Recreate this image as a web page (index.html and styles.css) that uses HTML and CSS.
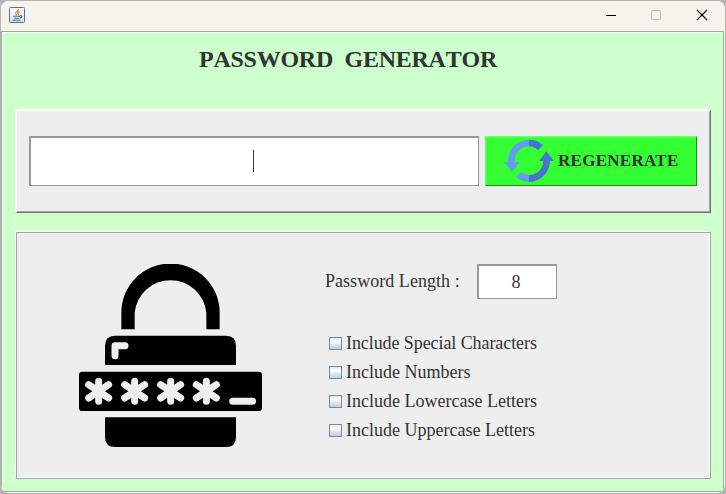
FILE: index.html
```
<!DOCTYPE html>
<html lang="en">
<head>
<meta charset="utf-8">
<title>Password Generator</title>
<link rel="stylesheet" href="styles.css">
</head>
<body>
<div class="window">
  <header class="titlebar">
    <svg class="java" width="16" height="16" viewBox="0 0 16 16">
      <defs><linearGradient id="jv" x1="0" y1="0" x2="0" y2="1"><stop offset="0" stop-color="#fff"/><stop offset="1" stop-color="#d3e0ea"/></linearGradient></defs>
      <rect x=".5" y=".5" width="15" height="15" rx="1" fill="url(#jv)" stroke="#55758d"/>
      <path d="M9.5 2.2C10 4 6 5 6.6 6.6C6.8 7.3 7.6 7.5 7.7 8.4M10.6 4.8C9 5.4 8.2 6.4 9.2 7.2C9.5 7.6 9.2 8 8.9 8.3" fill="none" stroke="#e5812b" stroke-width="1.2"/>
      <path d="M4 9.3H11M11 8.8C13.6 8.2 13.6 10.5 11 11M5 11.2H10.5M3.5 13.2H11.5" fill="none" stroke="#53788f" stroke-width="1.1"/>
    </svg>
    <svg class="controls" width="104" height="12" viewBox="0 0 104 12">
      <path d="M0 6.5H10" stroke="#000" fill="none"/>
      <rect x="45.5" y="1.5" width="9" height="9" rx=".5" stroke="#c5c1bd" fill="none"/>
      <path d="M91 1L101 11M101 1L91 11" stroke="#000" stroke-width="1.1" fill="none"/>
    </svg>
  </header>
  <main class="content">
    <h1 class="title">PASSWORD&nbsp; GENERATOR</h1>
    <section class="output">
      <div class="field result"><span class="caret"></span></div>
      <button class="regen" type="button">
        <svg width="50" height="44" viewBox="0 0 150 132">
          <path d="M75 2A64 64 0 0 0 12 69H0L24 99L46 69H32A43 43 0 0 1 75 22ZM51 98L36 114Q53 128 75 129V108Q62 107 51 98Z" fill="#649bec"/>
          <path d="M75 2V22Q91 23 102 34L117 18Q99 2 75 2ZM75 129A64 64 0 0 0 138 66H150L127 37L105 66H118A43 43 0 0 1 75 108Z" fill="#4874ce"/>
        </svg>
        <span>REGENERATE</span>
      </button>
    </section>
    <section class="settings">
      <svg class="lock" width="183" height="183" viewBox="27 27 549 549">
        <path d="M154 223V173A147 147 0 0 1 449 173V223H409V173A108 108 0 0 0 194 173V223Z"/>
        <path d="M105 330V272Q105 242 135 242H468Q498 242 498 272V330ZM105 487H498V546Q498 576 468 576H135Q105 576 105 546Z"/>
        <rect x="27" y="350" width="549" height="118" rx="10"/>
        <g class="cut">
          <path d="M135 302V272H165M488 439H548"/>
          <path id="star" d="M86 379V439M56 389L116 429M116 389L56 429"/>
          <use href="#star" x="108"/><use href="#star" x="216"/><use href="#star" x="323"/>
        </g>
      </svg>
      <div class="options">
        <div class="length"><span class="len-label">Password Length :</span><div class="field len">8</div></div>
        <label class="check"><i></i><span class="tight">Include Special Characters</span></label>
        <label class="check"><i></i><span>Include Numbers</span></label>
        <label class="check"><i></i><span>Include Lowercase Letters</span></label>
        <label class="check"><i></i><span>Include Uppercase Letters</span></label>
      </div>
    </section>
  </main>
</div>
</body>
</html>
```
FILE: styles.css
```
* { box-sizing: border-box; }
html, body { width: 726px; height: 494px; overflow: hidden; }
body { margin: 0; padding: 1px; background: #b5b3b5; color: #333; font-family: "Liberation Serif", "Times New Roman", serif; font-kerning: none; }
.window { height: 492px; border-radius: 8px; overflow: hidden; background: #fff; display: flex; flex-direction: column; }
.titlebar { height: 30px; flex: none; background: #f7f2ec; display: flex; justify-content: space-between; align-items: flex-start; padding: 6px 15px 0 8px; }
.controls { margin-top: 2px; flex: none; }
.content { flex: 1; min-height: 0; margin: 0 1px 1px 0; background: #cfc; border: 1px solid #93b193; border-left-color: #93b193; box-shadow: inset 0 1px #fff, inset 1px 0 #fff; padding: 12px 12px 0 13px; display: flex; flex-direction: column; }
.title { margin: 0 0 0 184px; height: 65px; font-size: 24px; line-height: 30px; letter-spacing: -.25px; white-space: nowrap; }
.output { width: 696px; height: 104px; flex: none; background: #eee; border: solid #fff; border-width: 2px 1px 1px 2px; border-right-color: #747474; border-bottom-color: #747474; box-shadow: inset -1px -1px #a6a6a6; padding: 25px 12px 0; display: flex; gap: 6px; }
.field { background: #fff; border: solid #999; border-width: 2px 1px 1px 2px; }
.result { width: 450px; height: 50px; display: flex; justify-content: center; padding-top: 12px; }
.caret { width: 1px; height: 22px; background: #333; margin-right: 3px; }
.regen { width: 212px; height: 50px; background: #3f3; border: 1px solid #6f6; border-right-color: #1a8f1a; border-bottom-color: #1a8f1a; box-shadow: inset 1px 1px #4dff4d; border-radius: 0; padding: 0 0 0 18px; display: flex; align-items: center; gap: 4px; color: #333; font: bold 17px "Liberation Serif", serif; letter-spacing: .28px; }
.settings { width: 696px; height: 248px; flex: none; margin-top: 18px; background: #eee; border: 1px solid #fff; border-right-color: #a6a6a6; border-bottom-color: #a6a6a6; box-shadow: inset 1px 1px #a6a6a6, inset -1px -1px #fff; padding: 32px 0 0 63px; display: flex; }
.lock { flex: none; }
.cut { fill: none; stroke: #eee; stroke-width: 21px; stroke-linecap: round; stroke-linejoin: round; }
.options { margin-left: 63px; font-size: 18px; white-space: nowrap; }
.tight { letter-spacing: -.08px; }
.length { display: flex; height: 65px; }
.len-label { width: 152px; line-height: 35px; letter-spacing: .04px; }
.len { width: 80px; height: 35px; line-height: 32px; text-align: center; padding-right: 3px; }
.check { display: flex; align-items: center; height: 29px; padding-left: 4px; }
.check i { width: 13px; height: 13px; margin-right: 4px; border: 1px solid #7a8a99; background: linear-gradient(#dfe9f4, #fff 35%, #dce7f2 60%, #b8cfe5); }
```
